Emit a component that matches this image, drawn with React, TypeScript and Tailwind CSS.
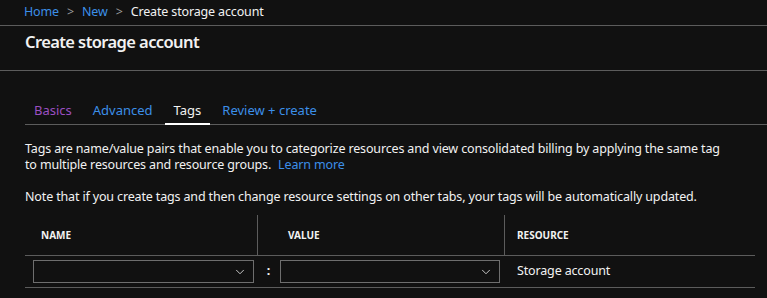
import { ChevronDown } from "lucide-react";

const font = { fontFamily: '"Noto Sans", "Open Sans", sans-serif' };

const Select = () => (
  <div className="flex h-[23px] w-full items-center justify-end border border-[#6e6e6e] bg-[#111111] pr-[6px]">
    <ChevronDown className="h-[14px] w-[14px] text-[#e0e0e0]" strokeWidth={1.5} />
  </div>
);

export default function App() {
  const tabs = [
    { label: "Basics", cls: "text-[#9b4fc1]" },
    { label: "Advanced", cls: "text-[#3c8fe8]" },
    { label: "Tags", cls: "text-[#f2f2f2]", active: true },
    { label: "Review + create", cls: "text-[#3c8fe8]" },
  ];

  return (
    <div
      className="h-[298px] w-[767px] overflow-hidden bg-[#111111] text-[12.5px] tracking-[-0.15px] text-[#f2f2f2]"
      style={font}
    >
      {/* breadcrumb */}
      <div className="flex h-[26px] items-center gap-[8px] border-b border-[#5c5c5c] pl-[24px]">
        <span className="text-[#3c8fe8]">Home</span>
        <span className="text-[#9a9a9a]">&gt;</span>
        <span className="text-[#3c8fe8]">New</span>
        <span className="text-[#9a9a9a]">&gt;</span>
        <span>Create storage account</span>
      </div>

      {/* title */}
      <div className="h-[45px] border-b border-[#5c5c5c] pl-[25px] pt-[2px]">
        <h1 className="text-[16.5px] font-semibold leading-[28px] tracking-[-0.6px]">Create storage account</h1>
      </div>

      <div className="pl-[25px]">
        {/* tabs */}
        <div className="mt-[28px] flex gap-[3px] border-b border-[#5c5c5c]">
          {tabs.map((t) => (
            <div
              key={t.label}
              className={`relative px-[9px] pb-[3px] text-[13px] leading-[22px] tracking-normal ${t.cls}`}
            >
              {t.label}
              {t.active && <div className="absolute bottom-[-1px] left-0 right-0 h-[2px] bg-white" />}
            </div>
          ))}
        </div>

        {/* description */}
        <p className="mt-[16px] leading-[16px]">
          Tags are name/value pairs that enable you to categorize resources and view consolidated billing by applying the same tag
          <br />
          to multiple resources and resource groups.
          <span className="ml-[7px] text-[#3c8fe8]">Learn more</span>
        </p>
        <p className="mt-[16px] leading-[16px]">
          Note that if you create tags and then change resource settings on other tabs, your tags will be automatically updated.
        </p>

        {/* table */}
        <div className="mt-[10px] w-[730px]">
          <div className="grid h-[41px] grid-cols-[232px_23px_224px_1fr] border-b border-[#5c5c5c] text-[10px] font-bold tracking-normal text-[#f2f2f2]">
            <div className="flex items-center pl-[16px]">NAME</div>
            <div className="border-l border-[#5c5c5c]" />
            <div className="flex items-center pl-[8px]">VALUE</div>
            <div className="flex items-center border-l border-[#5c5c5c] pl-[12px]">RESOURCE</div>
          </div>
          <div className="grid h-[32px] grid-cols-[232px_23px_224px_1fr] items-center border-b border-[#5c5c5c]">
            <div className="pl-[8px] pr-[3px]">
              <Select />
            </div>
            <div className="text-center font-bold">:</div>
            <div className="pr-[4px]">
              <Select />
            </div>
            <div className="pl-[13px]">Storage account</div>
          </div>
        </div>
      </div>
    </div>
  );
}
